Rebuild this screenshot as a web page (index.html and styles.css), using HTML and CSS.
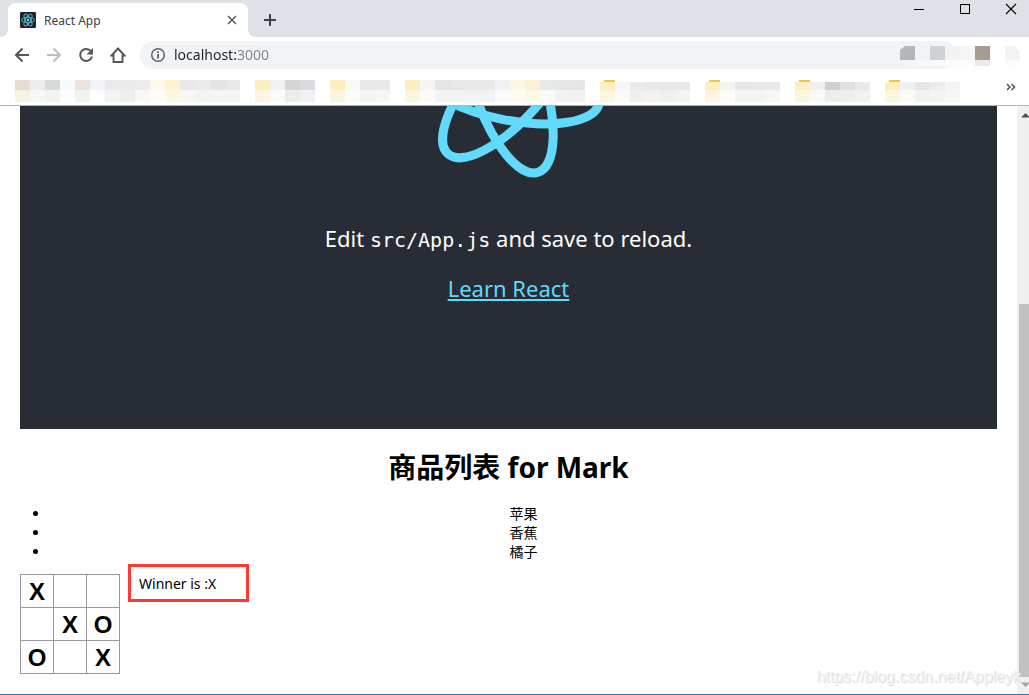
FILE: index.html
```
<!DOCTYPE html>
<html lang="zh-CN">
<head>
    <meta charset="UTF-8">
    <meta name="viewport" content="width=device-width, initial-scale=1.0">
    <title>React App</title>
    <link rel="stylesheet" href="styles.css">
</head>
<body>

    <!-- Tab strip -->
    <div class="tab-strip">
        <div class="tab">
            <svg class="favicon" width="16" height="16" viewBox="0 0 16 16">
                <rect width="16" height="16" rx="1" fill="#20232a"/>
                <g fill="none" stroke="#53b9d1" stroke-width="0.9">
                    <ellipse cx="8" cy="8" rx="6.6" ry="2.6"/>
                    <ellipse cx="8" cy="8" rx="6.6" ry="2.6" transform="rotate(60 8 8)"/>
                    <ellipse cx="8" cy="8" rx="6.6" ry="2.6" transform="rotate(120 8 8)"/>
                </g>
                <circle cx="8" cy="8" r="1.3" fill="#61dafb"/>
            </svg>
            <span class="tab-title">React App</span>
            <button class="icon-button" aria-label="Close tab">
                <svg width="16" height="16" viewBox="0 0 16 16"><path d="M4 4l8 8M12 4l-8 8" stroke="#5f6368" stroke-width="1.7"/></svg>
            </button>
        </div>
        <button class="icon-button new-tab" aria-label="New tab">
            <svg width="16" height="16" viewBox="0 0 16 16"><path d="M8 2v12M2 8h12" stroke="#3c4043" stroke-width="2"/></svg>
        </button>
        <div class="window-buttons">
            <button class="icon-button" aria-label="Minimize">
                <svg width="12" height="12" viewBox="0 0 12 12"><path d="M1 6.500h10" stroke="#000"/></svg>
            </button>
            <button class="icon-button" aria-label="Maximize">
                <svg width="12" height="12" viewBox="0 0 12 12"><rect x="1.500" y="1.500" width="9" height="9" fill="none" stroke="#000"/></svg>
            </button>
            <button class="icon-button" aria-label="Close">
                <svg width="12" height="12" viewBox="0 0 12 12"><path d="M1 1l10 10M11 1L1 11" stroke="#000" stroke-width="1.100"/></svg>
            </button>
        </div>
    </div>

    <!-- Toolbar -->
    <div class="toolbar">
        <button class="icon-button" aria-label="Back">
            <svg width="16" height="16" viewBox="0 0 16 16"><path d="M15 8H2.500M8.500 1.500L2 8l6.500 6.500" fill="none" stroke="#54575b" stroke-width="2"/></svg>
        </button>
        <button class="icon-button" aria-label="Forward">
            <svg width="16" height="16" viewBox="0 0 16 16"><path d="M1 8h12.500M7.500 1.500L14 8l-6.500 6.500" fill="none" stroke="#babcbe" stroke-width="2"/></svg>
        </button>
        <button class="icon-button" aria-label="Reload">
            <svg width="16" height="16" viewBox="0 0 16 16">
                <path d="M13.200 4.600A6 6 0 1 0 14 9.500" fill="none" stroke="#54575b" stroke-width="2"/>
                <path d="M15 1v6.500H8.500z" fill="#54575b"/>
            </svg>
        </button>
        <button class="icon-button" aria-label="Home">
            <svg width="16" height="16" viewBox="0 0 16 16"><path d="M8 1.500L1.500 8.500H3.500V15H12.500V8.500H14.500z" fill="none" stroke="#54575b" stroke-width="1.900"/></svg>
        </button>
        <div class="omnibox">
            <svg width="16" height="16" viewBox="0 0 16 16">
                <circle cx="8" cy="8" r="6.300" fill="none" stroke="#5f6368" stroke-width="1.500"/>
                <path d="M8 7v4.500M8 4.300v1.700" stroke="#5f6368" stroke-width="1.800"/>
            </svg>
            <input class="address" type="text" value="localhost:3000" aria-label="Address">
        </div>
        <svg class="extensions" width="120" height="20" viewBox="0 0 120 20">
            <path d="M0 4L5 0H15V14H0z" fill="#b4b6b9"/>
            <path d="M15 0h15v14H15z" fill="#f2f3f4"/>
            <path d="M30 0h15v14H30z" fill="#d0d1d2"/>
            <path d="M45 0h15v14H45z" fill="#f0f2f4"/>
            <path d="M60 0h15v14H60z" fill="#f6f6f6"/>
            <path d="M75 0h15v14H75z" fill="#a89b8f"/>
            <path d="M105 0h9l6 6v8h-15z" fill="#f3f3f3"/>
            <path d="M2 14h13v6H8z" fill="#f4f5f6"/>
            <path d="M15 14h30v6H15z" fill="#f7f8f9"/>
            <path d="M45 14h30v6H45z" fill="#fcfcfc"/>
            <path d="M75 14h15v6H75z" fill="#ebe8e8"/>
            <path d="M105 14h15l-5 6h-10z" fill="#fcfcfc"/>
        </svg>
    </div>

    <!-- Bookmarks bar, filled from the script below -->
    <div class="bookmarks">
        <div class="bookmark-list" id="bookmarkList"></div>
        <button class="icon-button" aria-label="More bookmarks">
            <svg width="10" height="8" viewBox="0 0 10 8"><path d="M1 1l3 3-3 3M5.500 1l3 3-3 3" fill="none" stroke="#54575b" stroke-width="1.600"/></svg>
        </button>
    </div>

    <!-- Page -->
    <div class="viewport">
        <div class="page">
            <header class="app-header">
                <svg class="app-logo" width="200" height="80" viewBox="0 21 200 80">
                    <g fill="none" stroke="#61dafb" stroke-width="9" transform="translate(100 0) rotate(11.500)">
                        <ellipse rx="92" ry="35"/>
                        <ellipse rx="92" ry="35" transform="rotate(60)"/>
                        <ellipse rx="92" ry="35" transform="rotate(120)"/>
                    </g>
                </svg>
                <p>Edit <code>src/App.js</code> and save to reload.</p>
                <a class="app-link" href="#">Learn React</a>
            </header>

            <h1>商品列表 for Mark</h1>
            <ul class="goods">
                <li>苹果</li>
                <li>香蕉</li>
                <li>橘子</li>
            </ul>

            <div class="game">
                <div class="board">
                    <button class="square">X</button>
                    <button class="square"></button>
                    <button class="square"></button>
                    <button class="square"></button>
                    <button class="square">X</button>
                    <button class="square">O</button>
                    <button class="square">O</button>
                    <button class="square"></button>
                    <button class="square">X</button>
                </div>
                <div class="status">Winner is :X</div>
            </div>
        </div>

        <div class="scrollbar">
            <svg width="12" height="17" viewBox="0 0 12 17"><path d="M4 11.500L8.500 7l4.500 4.500z" fill="#505050"/></svg>
            <div class="scroll-track"><div class="scroll-thumb"></div></div>
            <svg width="12" height="17" viewBox="0 0 12 17"><path d="M4 5.500l4.500 4.500L13 5.500z" fill="#a3a3a3"/></svg>
        </div>
        <div class="watermark">https://blog.csdn.net/Appleyk</div>
    </div>

    <script>
        // Top and bottom colour of each block, one list per bookmark group
        const groups = [
            { cells: ['ebd9d3 f5f3e2', 'eeedeb f7f7f7', 'd7dada f2f2f2', 'f8f9fc fdfdfd', 'f0e1dc edf5f0', 'f3f4f9 fdfdfd', 'e9eaea f3f3f4', 'ecebe9 eeeeee', 'ececf1 f8f8f9', 'fdfae9 fdfcf6', 'fdf1d0 fcf8e4', 'eae7e8 f7f7f8', 'ebebeb f3f3f4', 'e4e4e4 f5f5f5', 'e8e8e8 f5f5f5'] },
            { cells: ['fceebd fdf6df', 'f3f2f0 fafafa', 'd4d5d5 ececec', 'dadbde f1f1f1'] },
            { cells: ['fceebd fdf6df', 'f8f8f4 fbfbfb', 'e9e9e9 f4f4f4', 'e9e9ea f6f6f6'] },
            { cells: ['fceebd fdf6df', 'f5f6f3 fbfbfb', 'e5e5e8 f3f3f4', 'e8e8ea f3f3f4', 'e9e9ea f3f3f4', 'e9e9e9 f3f3f3', 'eff2f0 fafbfd', 'fdf6e4 fdfbf4', 'fcf2d2 fdf9e6', 'e5e9e7 f8fbf8', 'e8e7e5 f2f2f2', 'e8e5e4 f1f1f1'] },
            { folder: true, cells: ['fcefc0 fdf6df', 'f8f7f3 fbfaf8', 'ebebec f0f0f0', 'e9e7e8 f3f1f2', 'e9e7e8 f0f0f1', 'e9e9e9 f4f4f4'] },
            { folder: true, cells: ['fceebd fef6e2', 'f5f4f1 fdfcfa', 'e7e7e8 f4f4f5', 'e7e8e8 f4f4f5', 'e9e9e9 f6f6f6'] },
            { folder: true, cells: ['fceebd fdf6df', 'f1f0ed f9f9f6', 'cfd0d2 ececed', 'dfe1df eeeeef', 'e8e9e9 f2f2f2'] },
            { folder: true, cells: ['fceebd fdf6df', 'f0f0f0 fafafb', 'e6e6e7 f2f2f2', 'ebeeed f3f3f1', 'f4f5f5 f7f7f7'] }
        ];

        document.getElementById('bookmarkList').innerHTML = groups.map(group => {
            const top = group.folder ? 2 : 0;
            const tab = group.folder ? '<path d="M4 2V0h11v2z" fill="#e8c84f"/>' : '';
            const rects = group.cells.map((cell, i) => {
                const [upper, lower] = cell.split(' ');
                return `<rect x="${i * 15}" y="${top}" width="15" height="${10 - top}" fill="#${upper}"/>` +
                       `<rect x="${i * 15}" y="10" width="15" height="12" fill="#${lower}"/>`;
            }).join('');
            return `<svg width="${group.cells.length * 15}" height="22">${tab}${rects}</svg>`;
        }).join('');
    </script>
</body>
</html>
```
FILE: styles.css
```
* {
    box-sizing: border-box;
}
body {
    margin: 0;
    height: 100vh;
    display: flex;
    flex-direction: column;
    overflow: hidden;
    background: #fff;
    border-bottom: 1px solid #1883d7;
    font-family: "Noto Sans", "Noto Sans CJK SC", sans-serif;
    font-size: 14px;
    color: #000;
}
svg {
    display: block;
    flex: none;
}
.icon-button {
    display: flex;
    padding: 0;
    border: none;
    background: none;
    cursor: pointer;
}

/* Tab strip */
.tab-strip {
    display: flex;
    align-items: flex-end;
    height: 37px;
    padding-left: 8px;
    background: #dee1e6;
    flex: none;
}
.tab {
    position: relative;
    display: flex;
    align-items: center;
    gap: 8px;
    width: 240px;
    height: 34px;
    padding: 0 8px 0 12px;
    background: #fff;
    border-radius: 8px 8px 0 0;
}
/* curved feet of the active tab */
.tab::before,
.tab::after {
    content: "";
    position: absolute;
    bottom: 0;
    width: 8px;
    height: 8px;
}
.tab::before {
    right: 100%;
    background: radial-gradient(circle at top left, transparent 8px, #fff 8px);
}
.tab::after {
    left: 100%;
    background: radial-gradient(circle at top right, transparent 8px, #fff 8px);
}
.tab-title {
    flex: 1;
    font-size: 12px;
    color: #3c4043;
}
.new-tab {
    margin: 0 0 9px 14px;
}
.window-buttons {
    display: flex;
    align-self: flex-start;
    gap: 34px;
    margin: 3px 12px 0 auto;
}

/* Toolbar */
.toolbar {
    position: relative;
    display: flex;
    align-items: center;
    gap: 16px;
    height: 36px;
    padding: 0 72px 0 14px;
    flex: none;
}
.omnibox {
    display: flex;
    align-items: center;
    gap: 8px;
    flex: 1;
    height: 28px;
    margin-left: -2px;
    padding: 0 10px;
    background: #f1f3f4;
    border-radius: 14px;
}
.address {
    flex: 1;
    padding: 0 0 2px;
    border: none;
    outline: none;
    font-family: "Noto Sans", sans-serif;
    font-size: 14px;
    color: transparent;
    /* host is dark, port is grey */
    background: linear-gradient(to right, #202124 62px, #80868b 62px);
    -webkit-background-clip: text;
    background-clip: text;
}
.extensions {
    position: absolute;
    top: 9px;
    right: 9px;
}

/* Bookmarks */
.bookmarks {
    display: flex;
    align-items: flex-start;
    justify-content: space-between;
    height: 33px;
    padding: 7px 13px 0 15px;
    border-bottom: 1px solid #b6b4b8;
    flex: none;
}
.bookmark-list {
    display: flex;
    gap: 15px;
}
.bookmarks .icon-button {
    padding-top: 3px;
}

/* Page */
.viewport {
    position: relative;
    display: flex;
    flex: 1;
    min-height: 0;
}
.page {
    flex: 1;
    padding: 0 20px;
}
.app-header {
    display: flex;
    flex-direction: column;
    align-items: center;
    padding-bottom: 126px;
    background: #282c34;
    color: #fff;
    font-size: 22px;
    line-height: 30px;
}
.app-header p {
    margin: 37px 0 20px;
}
.app-header code {
    font-family: "DejaVu Sans Mono", monospace;
    font-size: 20px;
    line-height: 20px;
}
.app-link {
    color: #61dafb;
}
h1 {
    margin: 19px 0 18px;
    font-size: 28px;
    line-height: 38px;
    text-align: center;
}
.goods {
    margin: 0;
    padding-left: 30px;
    line-height: 19px;
    text-align: center;
}
.game {
    display: flex;
    align-items: flex-start;
    gap: 8px;
    margin-top: 3px;
}
.board {
    display: grid;
    grid-template-columns: repeat(3, 33px);
    margin-top: 10px;
    padding: 0 1px 1px 0;
}
.square {
    width: 34px;
    height: 34px;
    margin: 0 -1px -1px 0;
    padding: 0;
    background: #fff;
    border: 1px solid #999;
    font-family: "Liberation Sans", sans-serif;
    font-size: 24px;
    font-weight: bold;
    line-height: 34px;
    color: #000;
}
.status {
    width: 121px;
    padding: 7px 8px 5px;
    border: 3px solid #fb3a36;
    line-height: 20px;
}

/* Scrollbar */
.scrollbar {
    display: flex;
    flex-direction: column;
    width: 12px;
    background: #f0f0f0;
}
.scroll-track {
    display: flex;
    flex: 1;
    align-items: flex-end;
    padding-left: 2px;
}
.scroll-thumb {
    width: 100%;
    height: 67.4%;
    background: #c1c1c1;
}
.watermark {
    position: absolute;
    right: 8px;
    bottom: 7px;
    font-family: "Liberation Sans", sans-serif;
    font-size: 16px;
    line-height: 20px;
    color: #f4f4f4;
    text-shadow: 1px 1px 1px #d4d4d4;
}
```
